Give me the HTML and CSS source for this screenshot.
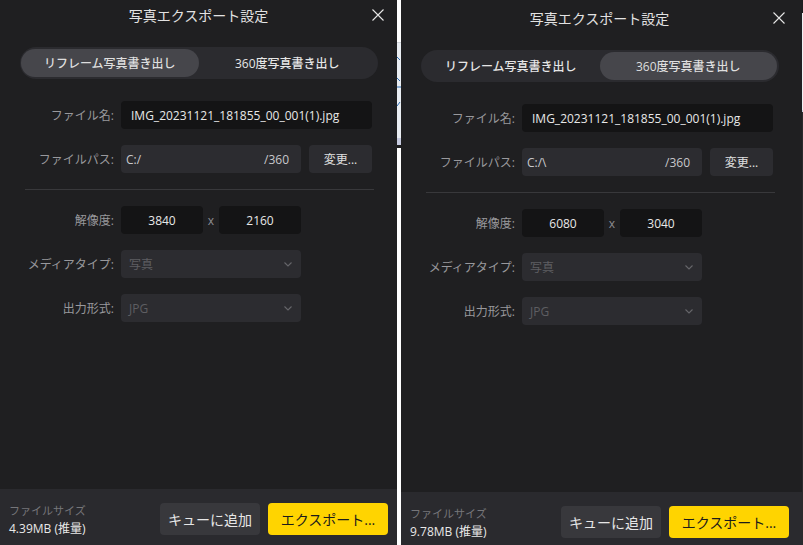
FILE: index.html
```html
<!DOCTYPE html>
<html lang="ja">
<head>
  <meta charset="UTF-8" />
  <title>写真エクスポート設定</title>
  <link rel="stylesheet" href="styles.css">
</head>
<body>

<div class="screens">

  <!-- Reframe export -->
  <div class="shot shot-left">
    <div class="panel">
      <div class="head">
        <div class="title">写真エクスポート設定</div>
        <svg class="close" width="12" height="12" viewBox="0 0 12 12"><path d="M0.5 0.5 L11.5 11.5 M11.5 0.5 L0.5 11.5" /></svg>
      </div>

      <div class="tabs">
        <div class="tab active">リフレーム写真書き出し</div>
        <div class="tab">360度写真書き出し</div>
      </div>

      <div class="form">
        <div class="row">
          <div class="label">ファイル名:</div>
          <div class="input dark name">IMG_20231121_181855_00_001(1).jpg</div>
        </div>
        <div class="row">
          <div class="label">ファイルパス:</div>
          <div class="field">
            <div class="input path"><span>C:/</span><span>/360</span></div>
            <div class="change">変更...</div>
          </div>
        </div>

        <div class="divider"></div>

        <div class="row">
          <div class="label">解像度:</div>
          <div class="field">
            <div class="input dark num">3840</div>
            <div class="times">x</div>
            <div class="input dark num">2160</div>
          </div>
        </div>
        <div class="row">
          <div class="label">メディアタイプ:</div>
          <div class="select"><span>写真</span><svg width="8" height="5" viewBox="0 0 8 5"><polyline points="0.5,0.5 4,4 7.5,0.5" /></svg></div>
        </div>
        <div class="row">
          <div class="label">出力形式:</div>
          <div class="select"><span>JPG</span><svg width="8" height="5" viewBox="0 0 8 5"><polyline points="0.5,0.5 4,4 7.5,0.5" /></svg></div>
        </div>
      </div>

      <div class="foot">
        <div class="size">
          <div class="size-label">ファイルサイズ</div>
          <div class="size-value">4.39MB (推量)</div>
        </div>
        <div class="actions">
          <button class="btn queue">キューに追加</button>
          <button class="btn export">エクスポート...</button>
        </div>
      </div>
    </div>
  </div>

  <!-- window behind, showing between the two shots -->
  <div class="gap">
    <svg width="4" height="545" viewBox="0 0 4 545">
      <rect x="0" y="42" width="4" height="96" fill="#e9edf2" />
      <rect x="0" y="42" width="4" height="1" fill="#d0d4da" />
      <rect x="0" y="138" width="4" height="7" fill="#c6cadf" />
      <rect x="0" y="145" width="4" height="3" fill="#1c1c1e" />
      <path d="M0 57 L3 60 M0 78 L3 81 M0 87 L4 87 M0 106 L3 102" stroke="#2f6db3" stroke-width="1" fill="none" />
    </svg>
  </div>

  <!-- 360 export -->
  <div class="shot shot-right">
    <div class="panel">
      <div class="head">
        <div class="title">写真エクスポート設定</div>
        <svg class="close" width="12" height="12" viewBox="0 0 12 12"><path d="M0.5 0.5 L11.5 11.5 M11.5 0.5 L0.5 11.5" /></svg>
      </div>

      <div class="tabs">
        <div class="tab">リフレーム写真書き出し</div>
        <div class="tab active">360度写真書き出し</div>
      </div>

      <div class="form">
        <div class="row">
          <div class="label">ファイル名:</div>
          <div class="input dark name">IMG_20231121_181855_00_001(1).jpg</div>
        </div>
        <div class="row">
          <div class="label">ファイルパス:</div>
          <div class="field">
            <div class="input path"><span>C:/\</span><span>/360</span></div>
            <div class="change">変更...</div>
          </div>
        </div>

        <div class="divider"></div>

        <div class="row">
          <div class="label">解像度:</div>
          <div class="field">
            <div class="input dark num">6080</div>
            <div class="times">x</div>
            <div class="input dark num">3040</div>
          </div>
        </div>
        <div class="row">
          <div class="label">メディアタイプ:</div>
          <div class="select"><span>写真</span><svg width="8" height="5" viewBox="0 0 8 5"><polyline points="0.5,0.5 4,4 7.5,0.5" /></svg></div>
        </div>
        <div class="row">
          <div class="label">出力形式:</div>
          <div class="select"><span>JPG</span><svg width="8" height="5" viewBox="0 0 8 5"><polyline points="0.5,0.5 4,4 7.5,0.5" /></svg></div>
        </div>
      </div>

      <div class="foot">
        <div class="size">
          <div class="size-label">ファイルサイズ</div>
          <div class="size-value">9.78MB (推量)</div>
        </div>
        <div class="actions">
          <button class="btn queue">キューに追加</button>
          <button class="btn export">エクスポート...</button>
        </div>
      </div>
    </div>
  </div>

  <div class="edge"></div>
</div>

</body>
</html>
```

FILE: styles.css
```css
* { box-sizing: border-box; margin: 0; padding: 0; }

body {
  background: #ffffff;
  font-family: 'Open Sans', 'Noto Sans CJK JP', sans-serif;
  overflow: hidden;
}

.screens {
  display: flex;
  height: 545px;
  overflow: hidden;
}

.shot {
  flex: none;
  height: 545px;
  overflow: hidden;
}

.shot-left { width: 397px; }
.shot-left .panel { margin-top: -3px; }
.shot-right { width: 401px; }

.gap {
  flex: none;
  width: 4px;
  background: #ffffff;
}

.gap svg { display: block; }

.edge {
  flex: none;
  width: 1px;
  background: linear-gradient(to bottom, #1e1e20 0 13px, #eef1f4 13px 110px, #c9d3e0 110px 112px, #2a2a2c 112px);
}

/* Panel */
.panel {
  width: 401px;
  height: 548px;
  background: #1f1f21;
  display: flex;
  flex-direction: column;
}

.head {
  height: 37px;
  position: relative;
  display: flex;
  align-items: center;
  justify-content: center;
  padding-right: 4px;
}

.title {
  font-size: 14px;
  color: #e2e2e2;
  line-height: 1;
}

.close {
  position: absolute;
  left: 372px;
  top: 12px;
  stroke: #e6e6e6;
  stroke-width: 1.1;
  fill: none;
}

/* Tabs */
.tabs {
  margin: 13px 23px 0 20px;
  height: 32px;
  padding: 2px 2px 2px 1px;
  background: #2b2b2f;
  border-radius: 16px;
  display: grid;
  grid-template-columns: 1fr 1fr;
}

.tab {
  border-radius: 14px;
  display: flex;
  align-items: center;
  justify-content: center;
  font-size: 12px;
  font-weight: 500;
  color: #e6e6e6;
}

.tab.active {
  background: #46464b;
  color: #dedede;
}

/* Form */
.form {
  margin-top: 22px;
  display: flex;
  flex-direction: column;
  gap: 16px;
}

.row {
  display: grid;
  grid-template-columns: 114px auto;
  column-gap: 7px;
  height: 28px;
  align-items: center;
}

.label {
  text-align: right;
  font-size: 12px;
  color: #98989c;
  white-space: nowrap;
}

.field {
  display: flex;
  align-items: center;
  height: 28px;
}

.input {
  height: 28px;
  border-radius: 4px;
  font-size: 12px;
  color: #e8e8e8;
  display: flex;
  align-items: center;
  white-space: nowrap;
}

.input.dark { background: #141415; }

.input.name {
  width: 251px;
  padding-left: 10px;
}

.input.path {
  width: 180px;
  background: #2c2c30;
  color: #c8c8cc;
  justify-content: space-between;
  padding: 0 12px 0 5px;
}

.change {
  width: 63px;
  height: 28px;
  margin-left: 8px;
  border-radius: 4px;
  background: #2c2c30;
  color: #e0e0e0;
  font-size: 12px;
  display: flex;
  align-items: center;
  justify-content: center;
}

.input.num {
  width: 82px;
  justify-content: center;
}

.times {
  width: 16px;
  text-align: center;
  font-size: 12px;
  color: #8e8e92;
}

.divider {
  height: 1px;
  margin: 0 27px 0 25px;
  background: #38383b;
}

.select {
  width: 180px;
  height: 28px;
  border-radius: 4px;
  background: #2c2c30;
  color: #5e5e62;
  font-size: 12px;
  display: flex;
  align-items: center;
  justify-content: space-between;
  padding: 0 9px 0 8px;
}

.select svg {
  stroke: #66666a;
  stroke-width: 1.1;
  fill: none;
}

/* Footer */
.foot {
  margin-top: auto;
  height: 56px;
  padding: 14px 13px 10px 9px;
  background: #2a2a2e;
  display: flex;
  justify-content: space-between;
}

.size-label {
  font-size: 11px;
  line-height: 16px;
  color: #76767a;
}

.size-value {
  margin-top: 1px;
  font-size: 12px;
  line-height: 18px;
  color: #e8e8e8;
}

.actions {
  display: flex;
  gap: 8px;
}

.btn {
  height: 32px;
  border: none;
  border-radius: 4px;
  font-family: 'Open Sans', 'Noto Sans CJK JP', sans-serif;
  font-size: 14px;
  cursor: pointer;
}

.btn.queue {
  width: 100px;
  background: #38383c;
  color: #e6e6e6;
}

.btn.export {
  width: 120px;
  background: #ffd400;
  color: #1b1b1b;
}
```
